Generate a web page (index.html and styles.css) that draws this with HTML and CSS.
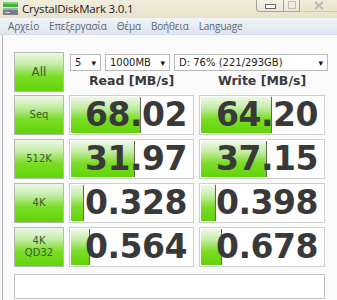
FILE: index.html
```html
<!DOCTYPE html>
<html>
<head>
<meta charset="utf-8">
<link rel="stylesheet" href="styles.css">
</head>
<body>
<div class="window">
  <div class="titlebar">
    <svg class="appicon" width="15" height="13" viewBox="0 0 15 13">
      <rect x="0" y="0" width="15" height="5" fill="#3cb43c"/>
      <rect x="0" y="0" width="15" height="2" fill="#7ad67a"/>
      <rect x="0" y="6" width="15" height="7" fill="#7a7f86"/>
      <rect x="0" y="6" width="15" height="2" fill="#a9aeb4"/>
      <rect x="2" y="10" width="5" height="1" fill="#d8dde2"/>
    </svg>
    <span class="title">CrystalDiskMark 3.0.1</span>
    <div class="wctrls">
      <div class="wbtn wmin"><span class="gmin"></span></div>
      <div class="wbtn wmax"><span class="gmax"></span></div>
      <div class="wbtn wclose">
        <svg width="10" height="9" viewBox="0 0 10 9"><path d="M1 1 L9 8 M9 1 L1 8" stroke="#b9b9b9" stroke-width="2" fill="none"/></svg>
      </div>
    </div>
  </div>
  <div class="menubar">
    <span>Αρχείο</span><span>Επεξεργασία</span><span>Θέμα</span><span>Βοήθεια</span><span>Language</span>
  </div>
  <div class="client">
    <div class="toprow">
      <div class="btn btn-all">All</div>
      <div class="topright">
        <div class="selects">
          <div class="sel s1"><span>5</span><i>▾</i></div>
          <div class="sel s2"><span>1000MB</span><i>▾</i></div>
          <div class="sel s3"><span>D: 76% (221/293GB)</span><i>▾</i></div>
        </div>
        <div class="heads">
          <div class="head">Read [MB/s]</div>
          <div class="head">Write [MB/s]</div>
        </div>
      </div>
    </div>
    <div class="row">
      <div class="btn">Seq</div>
      <div class="val"><div class="bar" style="width:69px"></div><span>68.02</span></div>
      <div class="val"><div class="bar" style="width:70px"></div><span>64.20</span></div>
    </div>
    <div class="row">
      <div class="btn">512K</div>
      <div class="val"><div class="bar" style="width:63px"></div><span>31.97</span></div>
      <div class="val"><div class="bar" style="width:65px"></div><span>37.15</span></div>
    </div>
    <div class="row">
      <div class="btn">4K</div>
      <div class="val"><div class="bar" style="width:12px"></div><span>0.328</span></div>
      <div class="val"><div class="bar" style="width:14px"></div><span>0.398</span></div>
    </div>
    <div class="row">
      <div class="btn btn-two">4K<br>QD32</div>
      <div class="val"><div class="bar" style="width:18px"></div><span>0.564</span></div>
      <div class="val"><div class="bar" style="width:20px"></div><span>0.678</span></div>
    </div>
    <div class="comment"></div>
  </div>
</div>
</body>
</html>
```
FILE: styles.css
```css
html, body {
  margin: 0;
  padding: 0;
}
body {
  width: 337px;
  height: 300px;
  overflow: hidden;
  background: #f8f8f8;
}
.window {
  width: 337px;
  height: 300px;
  display: flex;
  flex-direction: column;
}
.titlebar {
  height: 18px;
  flex: none;
  display: flex;
  align-items: flex-start;
  background: linear-gradient(#f1ecdc, #e9e2cb);
}
.appicon {
  margin: 2px 0 0 3px;
}
.title {
  margin: 1px 0 0 4px;
  font-family: "Open Sans", "Noto Sans", sans-serif;
  font-size: 11.5px;
  line-height: 16px;
  color: #1a1a1a;
  letter-spacing: -0.2px;
}
.wctrls {
  margin-left: auto;
  display: flex;
  height: 12px;
  margin-top: -1px;
}
.wbtn {
  height: 12px;
  border: 1px solid #a7a395;
  border-top: none;
  background: linear-gradient(#f6f3ea, #ebe6d6);
  display: flex;
  align-items: center;
  justify-content: center;
}
.wmin {
  width: 26px;
  border-radius: 0 0 0 4px;
}
.wmax {
  width: 15px;
  border-left: none;
}
.wclose {
  width: 37px;
  border-left: none;
  border-right: none;
  border-color: #cfcabb;
  background: linear-gradient(#f1ecdc, #e9e2cb);
}
.gmin {
  display: block;
  width: 9px;
  height: 3px;
  border: 1px solid #6b6b6b;
  background: #fff;
  margin-top: 3px;
}
.gmax {
  display: block;
  width: 6px;
  height: 6px;
  border: 1px solid #c4c0b4;
}
.menubar {
  height: 16px;
  flex: none;
  display: flex;
  gap: 10px;
  padding-left: 8px;
  align-items: center;
  background: linear-gradient(#f1f4f9, #dfe5ee);
  border-bottom: 1px solid #d7dde6;
  font-family: "Open Sans", "Noto Sans", sans-serif;
  font-size: 10px;
  letter-spacing: -0.15px;
  color: #5a6674;
}
.client {
  flex: 1;
  margin-left: 2px;
  border-left: 1px solid #b3b3b3;
  background: #fafafa;
  padding: 16px 0 0 11px;
  display: flex;
  flex-direction: column;
  gap: 4px;
}
.toprow {
  display: flex;
  gap: 5px;
  height: 40px;
}
.btn {
  width: 48px;
  height: 38px;
  flex: none;
  border: 1px solid #b3bbad;
  background: linear-gradient(#eef8e8 0%, #c3eca5 30%, #79dc24 62%, #62d40a 100%);
  display: flex;
  align-items: center;
  justify-content: center;
  text-align: center;
  font-family: "DejaVu Sans", sans-serif;
  font-size: 10px;
  line-height: 12px;
  color: #3d5a2b;
}
.btn-all {
  font-size: 12px;
  height: 38px;
  margin-top: 1px;
}
.topright {
  display: flex;
  flex-direction: column;
}
.selects {
  display: flex;
  gap: 4px;
  margin-top: 3px;
  margin-left: 1px;
}
.sel {
  height: 15px;
  border: 1px solid #b9b9b9;
  background: #fff;
  display: flex;
  align-items: center;
  padding: 0 4px 0 4px;
  font-family: "DejaVu Sans", sans-serif;
  font-size: 10px;
  color: #222;
}
.sel i {
  font-style: normal;
  margin-left: auto;
  font-size: 9px;
  color: #111;
}
.s1 { width: 21px; }
.s2 { width: 55px; }
.s3 { width: 144px; }
.heads {
  display: flex;
  gap: 5px;
  margin-top: 2px;
}
.head {
  font-family: "DejaVu Sans", sans-serif;
  font-weight: bold;
  font-size: 12.5px;
  line-height: 16px;
  color: #3a3a3a;
  text-align: center;
}
.head:first-child { width: 125px; }
.head:last-child { width: 126px; }
.row {
  display: flex;
  gap: 5px;
  height: 40px;
}
.val {
  position: relative;
  width: 123px;
  height: 38px;
  border: 1px solid #cfcfcf;
  background: #fff;
  display: flex;
  align-items: center;
  justify-content: flex-end;
  overflow: hidden;
}
.val:last-child { width: 124px; }
.bar {
  position: absolute;
  left: 1px;
  top: 1px;
  bottom: 1px;
  background: linear-gradient(#eef8e8 0%, #c3eca5 30%, #79dc24 62%, #62d40a 100%);
  border-right: 1px solid #5d6b55;
}
.val span {
  position: relative;
  font-family: "DejaVu Sans", sans-serif;
  font-weight: bold;
  font-size: 33px;
  line-height: 38px;
  color: #393939;
  padding-right: 6px;
  letter-spacing: -0.5px;
}
.comment {
  margin-top: 3px;
  width: 309px;
  height: 23px;
  border: 1px solid #c4c4c4;
  background: #fff;
}
```
